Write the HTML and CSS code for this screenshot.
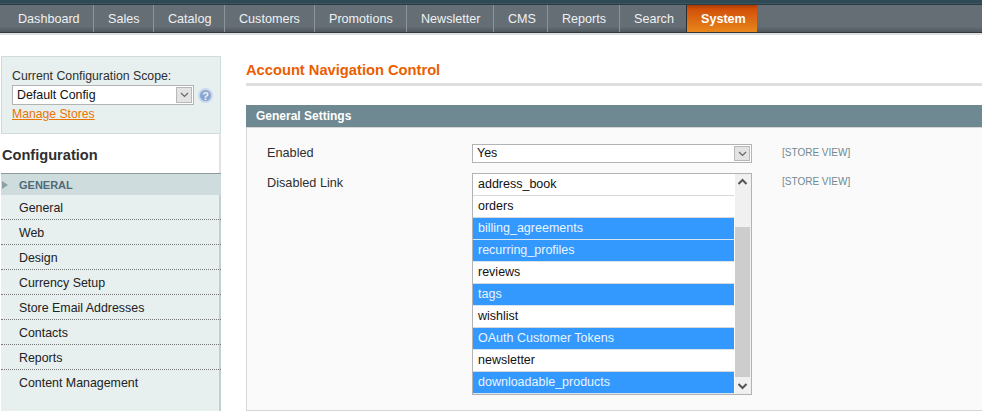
FILE: index.html
```html
<!DOCTYPE html>
<html lang="en">
<head>
	<meta charset="UTF-8">
	<title>Account Navigation Control</title>
	<link rel="stylesheet" href="styles.css">
</head>
<body>
	<div class="top_strip"></div>
	<ul class="nav">
		<li class="nav_dashboard">Dashboard</li>
		<li class="nav_sales">Sales</li>
		<li class="nav_catalog">Catalog</li>
		<li class="nav_customers">Customers</li>
		<li class="nav_promotions">Promotions</li>
		<li class="nav_newsletter">Newsletter</li>
		<li class="nav_cms">CMS</li>
		<li class="nav_reports">Reports</li>
		<li class="nav_search">Search</li>
		<li class="active">System</li>
	</ul>
	<div class="page">
		<div class="side">
			<div class="scope">
				<div class="scope_label">Current Configuration Scope:</div>
				<div class="scope_row">
					<div class="select scope_select">
						<span class="select_text">Default Config</span>
						<span class="select_btn">
							<svg width="9" height="6" viewBox="0 0 9 6"><path d="M1 1l3.5 3.5L8 1" fill="none" stroke="#666" stroke-width="1.2"/></svg>
						</span>
					</div>
					<svg class="help" width="15" height="15" viewBox="0 0 15 15">
						<circle cx="7.5" cy="7.5" r="7.5" fill="#c9d8ec"/>
						<circle cx="7.5" cy="7.5" r="5.5" fill="#8aa6d0"/>
						<text x="7.5" y="11.5" text-anchor="middle" class="help_mark">?</text>
					</svg>
				</div>
				<a class="manage" href="#">Manage Stores</a>
			</div>
			<h3 class="side_title">Configuration</h3>
			<div class="side_menu">
				<div class="side_head"><span class="side_arrow"></span>GENERAL</div>
				<ul class="side_list">
					<li>General</li>
					<li>Web</li>
					<li>Design</li>
					<li>Currency Setup</li>
					<li>Store Email Addresses</li>
					<li>Contacts</li>
					<li>Reports</li>
					<li>Content Management</li>
				</ul>
			</div>
		</div>
		<div class="main">
			<h3 class="main_title">Account Navigation Control</h3>
			<div class="section_head">General Settings</div>
			<div class="section_body">
				<div class="field">
					<label>Enabled</label>
					<div class="select field_select">
						<span class="select_text">Yes</span>
						<span class="select_btn">
							<svg width="9" height="6" viewBox="0 0 9 6"><path d="M1 1l3.5 3.5L8 1" fill="none" stroke="#666" stroke-width="1.2"/></svg>
						</span>
					</div>
					<span class="store_view">[STORE VIEW]</span>
				</div>
				<div class="field">
					<label class="label_low">Disabled Link</label>
					<div class="listbox">
						<ul class="options">
							<li>address_book</li>
							<li>orders</li>
							<li class="sel">billing_agreements</li>
							<li class="sel">recurring_profiles</li>
							<li>reviews</li>
							<li class="sel">tags</li>
							<li>wishlist</li>
							<li class="sel">OAuth Customer Tokens</li>
							<li>newsletter</li>
							<li class="sel">downloadable_products</li>
						</ul>
						<div class="scrollbar">
							<svg class="scroll_btn" width="15" height="17" viewBox="0 0 15 17"><path d="M3.5 10l4-4 4 4" fill="none" stroke="#555" stroke-width="2"/></svg>
							<div class="scroll_track"><div class="scroll_thumb"></div></div>
							<svg class="scroll_btn" width="15" height="17" viewBox="0 0 15 17"><path d="M3.5 7l4 4 4-4" fill="none" stroke="#555" stroke-width="2"/></svg>
						</div>
					</div>
					<span class="store_view">[STORE VIEW]</span>
				</div>
			</div>
		</div>
	</div>
</body>
</html>
```

FILE: styles.css
```css
*{
	margin: 0;
	padding: 0;
	list-style: none;
	box-sizing: border-box;
}
html,body{
	height: 411px;
	overflow: hidden;
}
body{
	background-color: #fff;
	font-family: "Liberation Sans", Arial, sans-serif;
	font-size: 12px;
	color: #2f2f2f;
}
.top_strip{
	height: 5px;
	background-color: #3a5560;
	border-top: 3px solid #2f4a54;
	border-bottom: 1px solid #2b3c44;
}
.nav{
	display: flex;
	height: 28px;
	background: linear-gradient(#666e75 0, #666e75 80%, #4f565c 100%);
	border-bottom: 1px solid #30383d;
	box-shadow: 0 2px 0 #dcdfe0;
}
.nav li{
	padding-left: 14px;
	line-height: 28px;
	font-size: 12.6px;
	color: #eef1f2;
	border-right: 1px solid #8d9498;
	height: 27px;
	white-space: nowrap;
}
.nav_dashboard{ width: 94px; padding-left: 18px !important; }
.nav_sales{ width: 60px; }
.nav_catalog{ width: 71px; }
.nav_customers{ width: 90px; }
.nav_promotions{ width: 92px; }
.nav_newsletter{ width: 87px; }
.nav_cms{ width: 54px; }
.nav_reports{ width: 72px; }
.nav_search{ width: 67px; }
.nav li.active{
	width: 71px;
	font-weight: bold;
	color: #fff;
	border-right: none;
	border-left: 1px solid #2b2f31;
	margin-left: -1px;
	background: linear-gradient(#a83c00 0, #d2500a 15%, #e8871c 100%);
}
.page{
	display: flex;
	padding-top: 23px;
}
.side{
	width: 220px;
	margin-left: 1px;
	flex-shrink: 0;
}
.scope{
	height: 78px;
	background-color: #e7efef;
	border: 1px solid #d0dcdc;
	padding: 12px 0 0 10px;
	line-height: 15px;
}
.scope_label{
	height: 16px;
	font-size: 12.3px;
}
.scope_row{
	display: flex;
	align-items: center;
	height: 20px;
}
.select{
	display: flex;
	background-color: #fff;
	border: 1px solid #b3b3b3;
	color: #111;
}
.select_text{
	flex: 1;
	padding-left: 4px;
	font-size: 12.4px;
	line-height: 18px;
}
.select_btn{
	display: flex;
	align-items: center;
	justify-content: center;
	width: 16px;
	margin: 1px;
	background-color: #e3e3e3;
	border: 1px solid #b8b8b8;
}
.scope_select{
	width: 182px;
	height: 20px;
}
.help{
	margin-left: 4px;
}
.help_mark{
	font-size: 11px;
	font-weight: bold;
	fill: #eef3fa;
}
.manage{
	display: block;
	margin-top: 2px;
	color: #ea7601;
	font-size: 12.2px;
}
.side_title{
	height: 39px;
	padding-left: 1px;
	font-size: 14.6px;
	line-height: 42px;
	color: #2f2f2f;
	border-right: 2px solid #e3e3e3;
}
.side_menu{
	background-color: #e7efef;
	border-right: 2px solid #c3cfcf;
	height: 240px;
}
.side_head{
	display: flex;
	align-items: center;
	height: 22px;
	padding-left: 1px;
	background-color: #cfdcde;
	border-top: 1px solid #8c9ba0;
	margin-right: -2px;
	font-size: 11px;
	font-weight: bold;
	color: #4f6b78;
}
.side_arrow{
	width: 0;
	height: 0;
	margin-right: 11px;
	border-left: 6px solid #8ba0a8;
	border-top: 4px solid transparent;
	border-bottom: 4px solid transparent;
}
.side_list li{
	height: 25px;
	padding-left: 18px;
	font-size: 12.4px;
	line-height: 27px;
	color: #222;
	border-bottom: 1px dotted #777;
	margin-right: -2px;
}
.side_list li:last-child{
	border-bottom: none;
}
.main{
	flex: 1;
	margin-left: 25px;
}
.main_title{
	height: 30px;
	padding-top: 6px;
	font-size: 14.7px;
	line-height: 17px;
	color: #eb5e00;
	border-bottom: 3px solid #dedede;
}
.section_head{
	height: 22px;
	margin-top: 19px;
	padding-left: 10px;
	background-color: #6f8992;
	color: #fff;
	font-size: 12px;
	font-weight: bold;
	line-height: 23px;
}
.section_body{
	height: 284px;
	padding: 16px 0 0 20px;
	background-color: #fafafa;
	border-left: 1px solid #d6d6d6;
	border-bottom: 1px solid #d6d6d6;
	border-top: 1px solid #d6d6d6;
}
.field{
	display: flex;
	align-items: flex-start;
	margin-bottom: 10px;
}
.field label{
	width: 205px;
	font-size: 12.7px;
	line-height: 19px;
	color: #2f2f2f;
}
.field label.label_low{
	line-height: 21px;
}
.field_select{
	width: 280px;
	height: 19px;
}
.field_select .select_text{
	line-height: 17px;
}
.store_view{
	margin-left: 30px;
	font-size: 10px;
	line-height: 18px;
	color: #6f8992;
}
.listbox{
	display: flex;
	width: 280px;
	height: 222px;
	background-color: #fff;
	border: 1px solid #b3b3b3;
}
.options{
	flex: 1;
}
.options li{
	height: 22px;
	padding-left: 5px;
	border-bottom: 1px solid #d8d8d8;
	font-size: 12.5px;
	line-height: 21px;
	color: #111;
}
.options li.sel{
	background-color: #3399ff;
	color: #eaf4ff;
	border-bottom-color: #d8e4ee;
}
.scrollbar{
	display: flex;
	flex-direction: column;
	width: 16px;
	margin-left: 1px;
	background-color: #f0f0f0;
}
.scroll_btn{
	flex-shrink: 0;
}
.scroll_track{
	flex: 1;
	padding-top: 36px;
	width: 15px;
}
.scroll_thumb{
	height: 100%;
	background-color: #cdcdcd;
}
```
